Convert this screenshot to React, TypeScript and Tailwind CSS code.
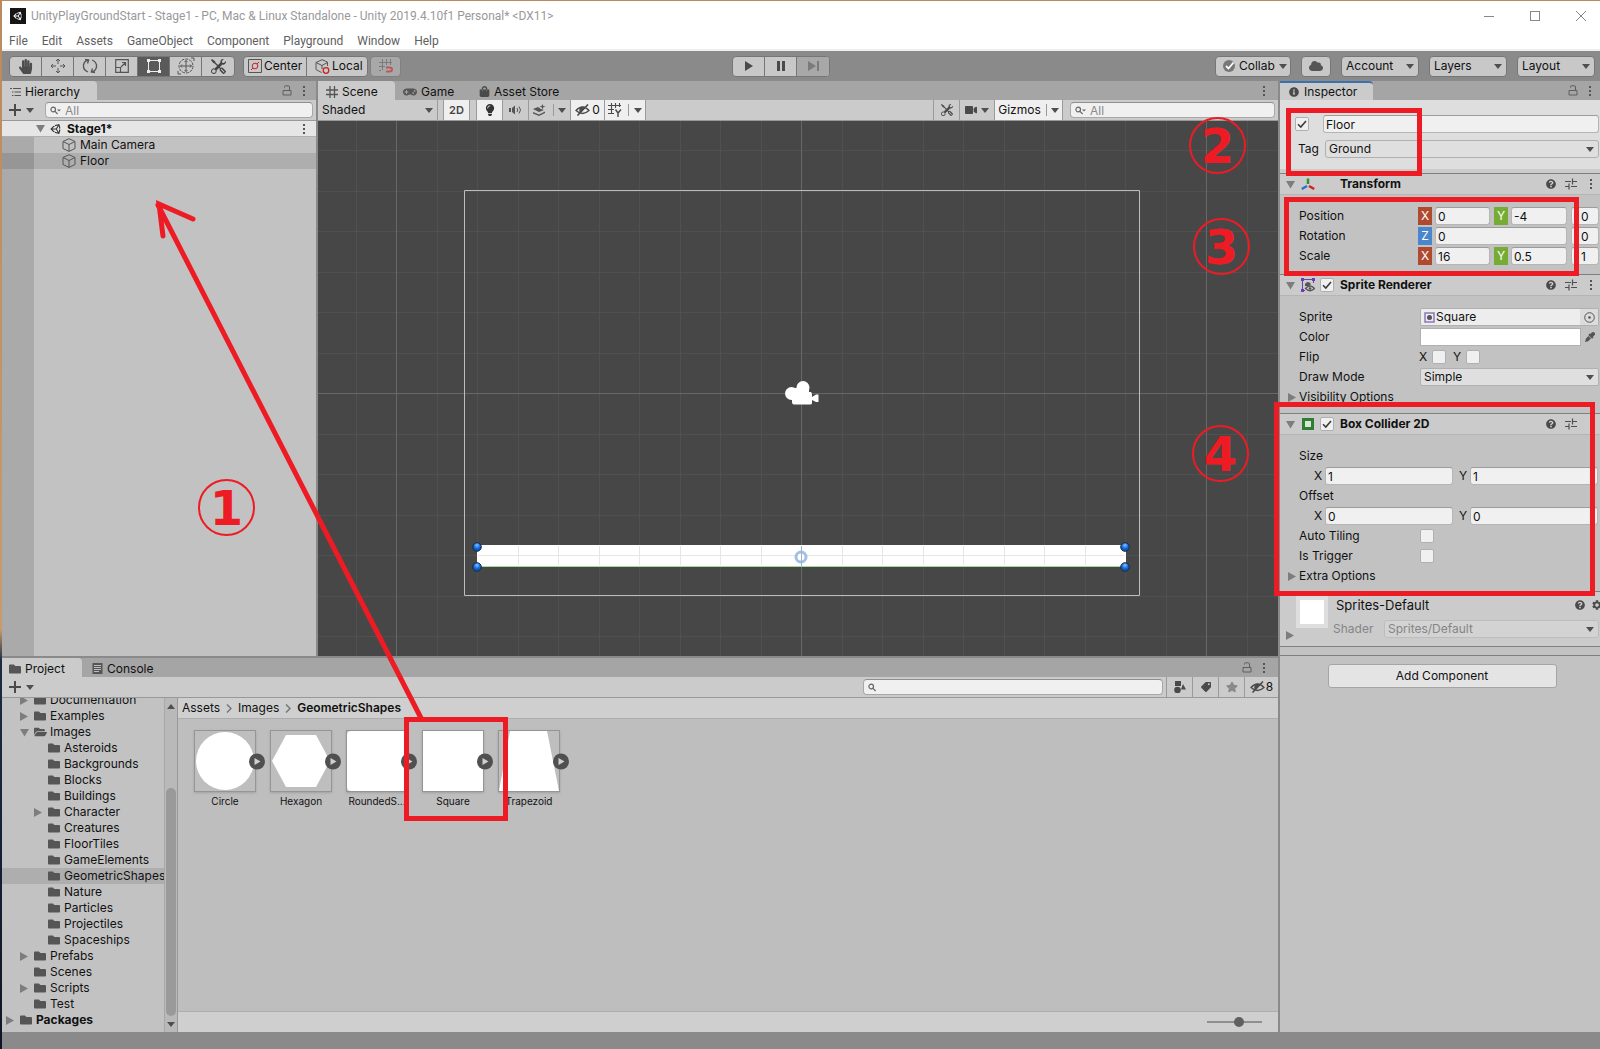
import type { ReactNode } from "react";
import {
  FaCloud,
  FaEyeDropper,
  FaFolder,
  FaFolderOpen,
  FaGamepad,
  FaHandPaper,
  FaInfoCircle,
  FaLightbulb,
  FaQuestionCircle,
  FaShoppingBag,
  FaStar,
  FaTag,
  FaUnity,
  FaVideo,
} from "react-icons/fa";
import { BsTools } from "react-icons/bs";
import { MdSettings } from "react-icons/md";

const menus = ["File", "Edit", "Assets", "GameObject", "Component", "Playground", "Window", "Help"];

type TreeItem = { name: string; level: number; arrow?: "open" | "closed"; selected?: boolean };

const tree: TreeItem[] = [
  { name: "Documentation", level: 1, arrow: "closed" },
  { name: "Examples", level: 1, arrow: "closed" },
  { name: "Images", level: 1, arrow: "open" },
  { name: "Asteroids", level: 2 },
  { name: "Backgrounds", level: 2 },
  { name: "Blocks", level: 2 },
  { name: "Buildings", level: 2 },
  { name: "Character", level: 2, arrow: "closed" },
  { name: "Creatures", level: 2 },
  { name: "FloorTiles", level: 2 },
  { name: "GameElements", level: 2 },
  { name: "GeometricShapes", level: 2, selected: true },
  { name: "Nature", level: 2 },
  { name: "Particles", level: 2 },
  { name: "Projectiles", level: 2 },
  { name: "Spaceships", level: 2 },
  { name: "Prefabs", level: 1, arrow: "closed" },
  { name: "Scenes", level: 1 },
  { name: "Scripts", level: 1, arrow: "closed" },
  { name: "Test", level: 1 },
  { name: "Packages", level: 0, arrow: "closed" },
];

const indents = ["pl-1", "pl-[18px]", "pl-8"];

const shapes = [
  { name: "Circle", shape: <circle cx="30" cy="30" r="29" /> },
  { name: "Hexagon", shape: <path d="M1 30 15 4H45L59 30 45 56H15Z" /> },
  { name: "RoundedS...", shape: <rect width="60" height="60" rx="4" /> },
  { name: "Square", shape: <rect width="60" height="60" /> },
  { name: "Trapezoid", shape: <path d="M11 0H48L60 60H0Z" /> },
];

const Caret = ({ className = "" }: { className?: string }) => (
  <svg viewBox="0 0 8 5" className={`w-2 h-[5px] shrink-0 fill-[#4f4f4f] ${className}`}>
    <path d="M0 0H8L4 5Z" />
  </svg>
);

const Fold = ({ open }: { open?: boolean }) => (
  <svg viewBox="0 0 9 9" className="w-[9px] h-[9px] shrink-0 fill-[#7d7d7d]">
    <path d={open ? "M0 1H9L4.500 8.500Z" : "M0 0V9L8 4.500Z"} />
  </svg>
);

const Dots = () => (
  <svg viewBox="0 0 4 12" className="w-1 h-3 shrink-0 fill-[#555]">
    <path d="M1 1h2v2H1zM1 5h2v2H1zM1 9h2v2H1z" />
  </svg>
);

const Lock = () => (
  <svg viewBox="0 0 10 11" className="w-[10px] h-[11px] shrink-0" fill="none" stroke="#5e5e5e">
    <path d="M1 5.500H9V10H1ZM2.500 2.500V1.500Q2.500 .8 3.500 .8H6.500Q7.500 .8 7.500 2V5" />
  </svg>
);

const Cube = () => (
  <svg viewBox="0 0 14 14" className="w-[14px] h-[14px] shrink-0" fill="none" stroke="#555">
    <path d="M7 .7 13 3.500V10.500L7 13.400 1 10.500V3.500ZM1 3.500 7 6.500 13 3.500M7 6.500V13.400" />
  </svg>
);

const Magnifier = ({ arrow }: { arrow?: boolean }) => (
  <svg viewBox="0 0 11 9" className="w-[11px] h-[9px] shrink-0" fill="none" stroke="#666" strokeWidth="1.200">
    <circle cx="3.200" cy="3.500" r="2.300" />
    <path d="M5 5.300 7.600 8" />
    {arrow && <path d="M7 3.500H11L9 5.500Z" fill="#666" stroke="none" />}
  </svg>
);

const HiddenEye = () => (
  <svg viewBox="0 0 15 12" className="w-[15px] h-3 shrink-0" fill="none" stroke="#4a4a4a" strokeWidth="1.300">
    <path d="M1 6.500Q7.500-.5 14 6.500Q7.500 12.500 1 6.500Z" />
    <path d="M5 8 9 3.500Q6.500 2.800 5 4.500Z" fill="#4a4a4a" />
    <path d="M2.500 11.500 13 .5" strokeWidth="1.600" />
  </svg>
);

const Sliders = () => (
  <svg viewBox="0 0 12 12" className="w-3 h-3 shrink-0" fill="none" stroke="#4f4f4f" strokeWidth="1.200">
    <path d="M0 3.500H6M7.500 .5V6.500M7.500 3.500H12M0 8.500H3.500M4 5.500V11.500M6 8.500H12" />
  </svg>
);

const Chevron = () => (
  <svg viewBox="0 0 6 9" className="w-1.5 h-[9px]" fill="none" stroke="#777" strokeWidth="1.500">
    <path d="M1 .5 5 4.500 1 8.500" />
  </svg>
);

const Search = ({ label, placeholder, className }: { label: string; placeholder?: string; className: string }) => (
  <label
    className={`flex items-center h-4 px-1 gap-1 rounded border border-[#a8a8a8] border-t-[#8f8f8f] bg-[#f0f0f0] ${className}`}
  >
    <Magnifier arrow={!!placeholder} />
    <input
      aria-label={label}
      placeholder={placeholder}
      className="w-full min-w-0 text-xs leading-3 bg-transparent outline-none placeholder:text-[#8a8a8a]"
    />
  </label>
);

const Dropdown = ({ label, value, className }: { label: string; value: string; className: string }) => (
  <span className={`relative flex items-center ${className}`}>
    <select aria-label={label} className="appearance-none w-full h-full outline-none">
      <option>{value}</option>
    </select>
    <Caret className="absolute right-1 pointer-events-none" />
  </span>
);

const Check = ({ label, checked }: { label: string; checked?: boolean }) => (
  <span className="relative flex w-[14px] h-[14px] shrink-0">
    <input
      type="checkbox"
      aria-label={label}
      defaultChecked={checked}
      className="peer appearance-none w-full h-full rounded-xs border border-[#b0b0b0] bg-[#f0f0f0]"
    />
    <svg
      viewBox="0 0 14 14"
      className="absolute inset-0 hidden peer-checked:block pointer-events-none"
      fill="none"
      stroke="#3c3c3c"
      strokeWidth="1.600"
    >
      <path d="M3 7.200 5.800 10 11 4" />
    </svg>
  </span>
);

const Field = ({ label, value, className = "flex-1" }: { label: string; value: string; className?: string }) => (
  <input
    aria-label={label}
    defaultValue={value}
    className={`min-w-0 h-[18px] px-0.5 rounded-[3px] border border-[#b5b5b5] border-t-[#9c9c9c] bg-[#f0f0f0] outline-none ${className}`}
  />
);

const ToolButton = ({ label, className = "", children }: { label: string; className?: string; children: ReactNode }) => (
  <button
    aria-label={label}
    className={`flex items-center justify-center w-8 h-full border-r border-[#767676] last:border-r-0 ${className}`}
  >
    {children}
  </button>
);

const BarButton = ({ label, className = "w-[26px]", children }: { label: string; className?: string; children: ReactNode }) => (
  <button
    aria-label={label}
    className={`flex items-center justify-center h-full shrink-0 border-l border-[#9a9a9a] ${className}`}
  >
    {children}
  </button>
);

type TabProps = { active?: boolean; focused?: boolean; className?: string; icon: ReactNode; children: ReactNode };

const Tab = ({ active, focused, className = "", icon, children }: TabProps) => (
  <button
    className={`flex items-center h-full gap-1 border-t-2 ${focused ? "border-[#3a72b0]" : "border-transparent"} ${
      active ? "bg-[#cbcbcb] rounded-tr-sm" : ""
    } ${className}`}
  >
    {icon}
    {children}
  </button>
);

const AddButton = () => (
  <button aria-label="Create" className="flex items-center gap-[5px]">
    <svg viewBox="0 0 12 12" className="w-3 h-3" stroke="#4a4a4a" strokeWidth="2"><path d="M6 0V12M0 6H12" /></svg>
    <Caret />
  </button>
);

const TitleBar = () => (
  <header className="bg-white border-b-2 border-[#efefef] font-[Roboto,sans-serif]">
    <div className="flex items-center h-[30px] pl-2 pr-[14px]">
      <span className="flex items-center justify-center w-4 h-4 bg-[#151515]">
        <FaUnity className="w-[10px] h-[10px] text-white" />
      </span>
      <h1 className="ml-[5px] text-xs text-[#999] whitespace-nowrap">
        UnityPlayGroundStart - Stage1 - PC, Mac &amp; Linux Standalone - Unity 2019.4.10f1 Personal* &lt;DX11&gt;
      </h1>
      <div className="flex items-center gap-9 ml-auto">
        <button aria-label="Minimize" className="w-[10px] h-[10px]">
          <svg viewBox="0 0 10 10" stroke="#888"><path d="M0 5.500H10" /></svg>
        </button>
        <button aria-label="Maximize" className="w-[10px] h-[10px] border border-[#888]" />
        <button aria-label="Close" className="w-[10px] h-[10px]">
          <svg viewBox="0 0 10 10" stroke="#888"><path d="M0 0 10 10M10 0 0 10" /></svg>
        </button>
      </div>
    </div>
    <nav className="flex gap-[14px] h-[18px] pt-px pl-[7px] text-xs leading-[18px] text-[#606060]">
      {menus.map((menu) => (
        <button key={menu}>{menu}</button>
      ))}
    </nav>
  </header>
);

const Toolbar = () => (
  <div className="flex items-center h-[30px] pl-[7px] pr-[5px] bg-[#8a8a8a]">
    <div className="flex flex-1">
      <div className="flex h-[21px] rounded-sm border border-[#767676] bg-[#c8c8c8] overflow-hidden">
        <ToolButton label="Hand"><FaHandPaper className="w-[15px] h-[15px] text-[#4d4d4d]" /></ToolButton>
        <ToolButton label="Move">
          <svg viewBox="0 0 16 16" className="w-4 h-4" fill="none" stroke="#555">
            <path d="M8 1V6M8 10V15M1 8H6M10 8H15M6 3 8 1 10 3M6 13 8 15 10 13M3 6 1 8 3 10M13 6 15 8 13 10" />
          </svg>
        </ToolButton>
        <ToolButton label="Rotate">
          <svg viewBox="0 0 16 16" className="w-4 h-4" fill="none" stroke="#555" strokeWidth="1.300">
            <path d="M6 14Q1 12 1.500 7Q2.500 2.500 6.500 2M3 1.500 6.700 2 5.500 5.500M10 2Q15 4 14.500 9Q13.500 13.500 9.500 14M13 14.500 9.300 14 10.500 10.500" />
          </svg>
        </ToolButton>
        <ToolButton label="Scale">
          <svg viewBox="0 0 14 14" className="w-[14px] h-[14px]" fill="none" stroke="#555" strokeWidth="1.200">
            <path d="M.7 .7H13.300V13.300H.7ZM.7 8.500H5.500V13.300M6 8 10.500 3.500M7 3.500H10.500V7" />
          </svg>
        </ToolButton>
        <ToolButton label="Rect" className="bg-[#5a5a5a]">
          <svg viewBox="0 0 16 16" className="w-4 h-4" fill="#eee" stroke="#eee">
            <path d="M2.500 2.500H13.500V13.500H2.500Z" fill="none" />
            <path d="M1 1H4V4H1ZM12 1H15V4H12ZM1 12H4V15H1ZM12 12H15V15H12Z" stroke="none" />
          </svg>
        </ToolButton>
        <ToolButton label="Transform tool">
          <svg viewBox="0 0 18 18" className="w-[18px] h-[18px]" fill="none" stroke="#555">
            <circle cx="9" cy="9" r="7" strokeDasharray="3 1" />
            <path d="M9 3.500V14.500M3.500 9H14.500M7.500 5 9 3.500 10.500 5M7.500 13 9 14.500 10.500 13M5 7.500 3.500 9 5 10.500M13 7.500 14.500 9 13 10.500M14 1H17V4M4 17H1V14" />
          </svg>
        </ToolButton>
        <ToolButton label="Custom tools"><BsTools className="w-[15px] h-[15px] text-[#444]" /></ToolButton>
      </div>
      <div className="flex h-[21px] ml-2 rounded-sm border border-[#767676] bg-[#c8c8c8]">
        <button className="flex items-center gap-0.5 pl-1 w-[63px] border-r border-[#767676]">
          <svg viewBox="0 0 14 14" className="w-[14px] h-[14px] shrink-0" fill="none" stroke="#555">
            <path d="M.5 .5H13.500V13.500H.5Z" />
            <path d="M3 11 5 9M9 5 11 3" stroke="#c22" />
            <circle cx="7" cy="7" r="2.800" stroke="#c22" />
          </svg>
          Center
        </button>
        <button className="flex items-center gap-0.5 pl-2 w-[60px]">
          <svg viewBox="0 0 15 15" className="w-[15px] h-[15px] shrink-0" fill="none" stroke="#555">
            <path d="M7 .7 12.500 3V7M7 .7 1 3.500V10.500L6.500 13.500M1 3.500 7 6.500 12.500 3.500M7 6.500V10" />
            <circle cx="11" cy="11.500" r="2.800" stroke="#c22" strokeWidth="1.300" />
          </svg>
          Local
        </button>
      </div>
      <button
        aria-label="Grid snapping"
        className="flex items-center justify-center w-[31px] h-[21px] ml-0.5 rounded-sm border border-[#808080] bg-[#a8a8a8]"
      >
        <svg viewBox="0 0 16 16" className="w-4 h-4" fill="none" stroke="#7b7b7b">
          <path d="M4.500 1V12M8.500 1V7M12.500 1V7M1 4.500H14M1 8.500H7M1 12.500H3" />
          <path d="M8 9.500H11.500Q14 9.500 14 11.500T11.500 13.500H8" stroke="#b85b5b" strokeWidth="2" />
        </svg>
      </button>
    </div>
    <div className="flex h-[21px] mr-[42px] rounded-sm border border-[#767676] bg-[#c8c8c8] overflow-hidden">
      <ToolButton label="Play">
        <svg viewBox="0 0 10 10" className="w-[10px] h-[10px] fill-[#4a4a4a]"><path d="M1 0 9 5 1 10Z" /></svg>
      </ToolButton>
      <ToolButton label="Pause">
        <svg viewBox="0 0 10 10" className="w-[10px] h-[10px] fill-[#4a4a4a]"><path d="M1 0H4V10H1ZM6 0H9V10H6Z" /></svg>
      </ToolButton>
      <ToolButton label="Step" className="bg-[#a8a8a8]">
        <svg viewBox="0 0 11 10" className="w-[11px] h-[10px] fill-[#7b7b7b]"><path d="M0 0 8 5 0 10ZM9 0H11V10H9Z" /></svg>
      </ToolButton>
    </div>
    <div className="flex flex-1 justify-end gap-[10px] h-[21px]">
      <button className="flex items-center gap-1 w-[76px] pl-[7px] rounded-sm border border-[#767676] bg-[#c8c8c8]">
        <svg viewBox="0 0 12 12" className="w-3 h-3 shrink-0">
          <circle cx="6" cy="6" r="6" fill="#777" />
          <path d="M3 6 5.500 8.500 10.500 2.500" stroke="#fff" strokeWidth="1.800" fill="none" />
        </svg>
        Collab
        <Caret />
      </button>
      <button aria-label="Cloud" className="flex items-center justify-center w-[30px] rounded-sm border border-[#767676] bg-[#c8c8c8]">
        <FaCloud className="w-[14px] h-[14px] text-[#555]" />
      </button>
      {["Account", "Layers", "Layout"].map((name) => (
        <Dropdown key={name} label={name} value={name} className="w-[78px] pl-1 rounded-sm border border-[#767676] bg-[#c8c8c8]" />
      ))}
    </div>
  </div>
);

const Hierarchy = () => (
  <section className="flex flex-col w-[314px] shrink-0 bg-[#c2c2c2]">
    <div className="flex items-center h-[19px] pr-2.5 bg-[#a5a5a5]">
      <Tab
        active
        className="w-[95px] pl-2"
        icon={
          <svg viewBox="0 0 11 10" className="w-[11px] h-[10px]" stroke="#555" strokeWidth="1.200">
            <path d="M0 1.500H2M3 1.500H11M2 5H3.500M4.500 5H11M2 8.500H3.500M4.500 8.500H11" />
          </svg>
        }
      >
        Hierarchy
      </Tab>
      <div className="flex items-center gap-2.5 ml-auto"><Lock /><Dots /></div>
    </div>
    <div className="flex items-center h-[21px] pl-[7px] pr-[3px] border-b border-[#999] bg-[#cbcbcb]">
      <AddButton />
      <Search label="Search hierarchy" placeholder="All" className="flex-1 ml-[11px]" />
    </div>
    <div className="flex items-center h-4 pl-[34px] pr-2.5 border-b border-[#b0b0b0] bg-[#e6e6e6] font-bold">
      <Fold open />
      <FaUnity className="w-3 h-3 ml-[5px] mr-[5px] text-[#333]" />
      Stage1*
      <span className="ml-auto"><Dots /></span>
    </div>
    <ul className="flex-1 bg-[linear-gradient(90deg,#aaa_32px,#c2c2c2_32px)]">
      <li className="flex items-center h-4 pl-[60px] gap-1"><Cube />Main Camera</li>
      <li className="flex items-center h-4 pl-[60px] gap-1 bg-[linear-gradient(90deg,#969696_32px,#aeaeae_32px)]">
        <Cube />Floor
      </li>
    </ul>
  </section>
);

const gridX = Array.from({ length: 24 }, (_, i) => 483.5 + (i - 12) * 40.5);
const gridY = Array.from({ length: 13 }, (_, i) => 272.5 + (i - 6) * 40.5);

const SceneCanvas = () => (
  <svg viewBox="0 0 960 535" preserveAspectRatio="xMidYMid slice" className="flex-1 w-full min-h-0 bg-[#474747]">
    <defs>
      <radialGradient id="handle" cx=".5" cy=".3">
        <stop offset="0" stopColor="#8ec3ff" />
        <stop offset=".6" stopColor="#1f78e8" />
        <stop offset="1" stopColor="#0a56c0" />
      </radialGradient>
    </defs>
    <g stroke="#505050" shapeRendering="crispEdges">
      {gridX.map((x) => <path key={x} d={`M${x} 0V535`} />)}
      {gridY.map((y) => <path key={y} d={`M0 ${y}H960`} />)}
    </g>
    <path d="M78.500 0V535M483.500 0V535M888.500 0V535M0 272.500H960" stroke="#686868" />
    <path d="M146.500 69.500H821.500V474.500H146.500Z" fill="none" stroke="#bdbdbd" />
    <path d="M159 424H808V445H159Z" fill="#fff" />
    <g stroke="#e6e6e6" shapeRendering="crispEdges">
      {gridX.slice(5, 20).map((x) => <path key={x} d={`M${x} 425V444`} />)}
      <path d="M160 434.500H807" />
    </g>
    <path d="M159 445.500H808" stroke="#9fdc96" />
    <circle cx="483" cy="436" r="5" fill="#fff" stroke="#a3bfe6" strokeWidth="3" />
    <path d="M483.500 425V445" stroke="#9fb0c8" />
    {[159, 807].map((x) =>
      [426, 446].map((y) => (
        <circle key={`${x}-${y}`} cx={x} cy={y} r="4.300" fill="url(#handle)" stroke="#1d2b40" />
      )),
    )}
    <g fill="#fff">
      <circle cx="473.500" cy="272.500" r="6.500" />
      <circle cx="485" cy="266.500" r="6.500" />
      <path d="M474 267H491V271H493Q494 272 494 274V282Q494 283.500 492 283.500H476Q474 283.500 474 281ZM494 276 498 273.500H500.500V281H498L494 279Z" />
    </g>
  </svg>
);

const Scene = () => (
  <section className="flex flex-col flex-1 min-w-0">
    <div className="flex items-center h-[19px] pr-3 bg-[#a5a5a5]">
      <Tab
        active
        className="w-[77px] pl-2"
        icon={
          <svg viewBox="0 0 12 12" className="w-3 h-3" stroke="#555" strokeWidth="1.300">
            <path d="M4 0V12M8.500 0V12M0 4H12M0 8.500H12" />
          </svg>
        }
      >
        Scene
      </Tab>
      <Tab className="w-[77px] pl-2" icon={<FaGamepad className="w-[14px] h-[14px] text-[#555]" />}>Game</Tab>
      <Tab className="pl-[7px]" icon={<FaShoppingBag className="w-[11px] h-[11px] text-[#4a4a4a]" />}>Asset Store</Tab>
      <span className="ml-auto"><Dots /></span>
    </div>
    <div className="flex items-center h-[21px] pr-[3px] border-b border-[#999] bg-[#cbcbcb]">
      <Dropdown label="Shading mode" value="Shaded" className="w-[120px] h-full pl-1 border-r border-[#9a9a9a]" />
      <BarButton label="2D" className="w-[26px] ml-[5px] bg-[#efefef] text-[11px] font-semibold text-[#444]">2D</BarButton>
      <span className="w-[7px] h-full border-l border-[#9a9a9a]" />
      <BarButton label="Lighting" className="w-[26px] bg-[#efefef]"><FaLightbulb className="w-3 h-3 text-[#333]" /></BarButton>
      <BarButton label="Audio">
        <svg viewBox="0 0 13 10" className="w-[13px] h-[10px]" fill="none" stroke="#555">
          <path d="M0 3H2V7H0ZM3 3 6 .5V9.500L3 7Z" fill="#555" stroke="none" />
          <path d="M8 3Q9.500 5 8 7M10 1.500Q13 5 10 8.500" />
        </svg>
      </BarButton>
      <BarButton label="Effects" className="w-[42px] gap-[7px]">
        <svg viewBox="0 0 13 12" className="w-[13px] h-3" fill="#555">
          <path d="M0 5 5 3 8 5 11 6 6 8ZM0 8 6 10.500 12 7.500V9L6 12 0 9.500ZM9.500 0 10.300 2 12.500 2.500 10.300 3.300 9.500 5.500 8.700 3.300 6.500 2.500 8.700 2Z" />
        </svg>
        <span className="flex items-center h-3 pl-1 border-l border-[#9a9a9a]"><Caret /></span>
      </BarButton>
      <BarButton label="Hidden objects" className="w-[34px] gap-0.5 bg-[#efefef]"><HiddenEye />0</BarButton>
      <BarButton label="Grid axis" className="w-[42px] gap-1.5 border-r bg-[#efefef]">
        <svg viewBox="0 0 14 14" className="w-[14px] h-[14px]" fill="none" stroke="#4a4a4a" strokeWidth="1.100">
          <path d="M3.500 0V11M7.500 0V5M11.500 0V4M0 2.500H13M0 6.500H6M0 10.500H6" />
          <path d="M7.500 6.500 10 10 13 6.500M10 10V14" strokeWidth="1.400" />
        </svg>
        <span className="flex items-center h-3 pl-[5px] border-l border-[#9a9a9a]"><Caret /></span>
      </BarButton>
      <span className="flex-1" />
      <BarButton label="Component tools"><BsTools className="w-3 h-3 text-[#4a4a4a]" /></BarButton>
      <BarButton label="Scene camera" className="w-[35px] gap-1"><FaVideo className="w-3 h-3 text-[#4a4a4a]" /><Caret /></BarButton>
      <BarButton label="Gizmos" className="w-[69px] gap-[5px] border-r bg-[#efefef]">
        Gizmos
        <span className="flex items-center h-3 pl-1 border-l border-[#9a9a9a]"><Caret /></span>
      </BarButton>
      <Search label="Search scene" placeholder="All" className="w-[205px] ml-[7px]" />
    </div>
    <SceneCanvas />
  </section>
);

const Project = () => (
  <section className="flex flex-col h-[374px] bg-[#c2c2c2]">
    <div className="flex items-center h-[19px] shrink-0 pr-3 bg-[#a5a5a5]">
      <Tab active className="w-20 pl-[7px]" icon={<FaFolder className="w-3 h-3 text-[#555]" />}>Project</Tab>
      <Tab
        className="pl-2.5"
        icon={
          <svg viewBox="0 0 11 11" className="w-[11px] h-[11px]">
            <path d="M.5 0H10.500V11H.5Z" fill="#555" />
            <path d="M2 2.500H9M2 4.500H9M2 6.500H9M2 8.500H7" stroke="#bbb" />
          </svg>
        }
      >
        Console
      </Tab>
      <div className="flex items-center gap-2.5 ml-auto"><Lock /><Dots /></div>
    </div>
    <div className="flex items-center h-[21px] shrink-0 pl-[7px] border-b border-[#999] bg-[#cbcbcb]">
      <AddButton />
      <Search label="Search project" className="w-[300px] ml-auto mr-[3px]" />
      <BarButton label="Search by type">
        <svg viewBox="0 0 12 12" className="w-3 h-3" fill="#4a4a4a">
          <path d="M1 0H7V5H1ZM9 3 12 8.500H7Z" />
          <circle cx="3.500" cy="9" r="3.300" />
        </svg>
      </BarButton>
      <BarButton label="Search by label"><FaTag className="w-[10px] h-[10px] -scale-x-100 text-[#4a4a4a]" /></BarButton>
      <BarButton label="Save search"><FaStar className="w-3 h-3 text-[#8a8a8a]" /></BarButton>
      <BarButton label="Hidden packages" className="w-[34px] gap-px"><HiddenEye />8</BarButton>
    </div>
    <div className="flex flex-1 min-h-0">
      <div className="w-[162px] shrink-0 overflow-hidden">
        <ul className="-mt-1.5">
          {tree.map((item) => (
            <li
              key={item.name}
              className={`flex items-center h-4 whitespace-nowrap ${indents[item.level]} ${
                item.selected ? "bg-[#aeaeae]" : ""
              } ${item.level === 0 ? "font-bold" : ""}`}
            >
              <span className="w-[14px] shrink-0">{item.arrow && <Fold open={item.arrow === "open"} />}</span>
              {item.arrow === "open" ? (
                <FaFolderOpen className="w-[13px] h-3 mr-[3px] shrink-0 text-[#555]" />
              ) : (
                <FaFolder className="w-3 h-3 mr-1 shrink-0 text-[#555]" />
              )}
              {item.name}
            </li>
          ))}
        </ul>
      </div>
      <div className="flex flex-col items-center w-[14px] shrink-0 pt-1.5 pb-[5px] border-x border-[#a8a8a8] border-r-[#999] bg-[#b9b9b9]">
        <Caret className="rotate-180" />
        <span className="w-[10px] h-[228px] mt-auto mb-1.5 rounded-full bg-[#9a9a9a]" />
        <Caret />
      </div>
      <div className="flex flex-col flex-1 bg-[#bebebe]">
        <nav className="flex items-center gap-1.5 h-[21px] pl-1 border-b border-[#adadad] bg-[#cfcfcf]">
          <a href="#assets">Assets</a>
          <Chevron />
          <a href="#images">Images</a>
          <Chevron />
          <a href="#geometric-shapes" className="font-semibold">GeometricShapes</a>
        </nav>
        <div className="flex flex-1 gap-[14px] pt-[11px] pl-4">
          {shapes.map(({ name, shape }) => (
            <figure key={name} className="relative w-[62px]">
              <svg viewBox="0 0 60 60" className="w-[62px] h-[62px] border border-[#959595] shadow-[0_1px_2px_#8888]" fill="#fff">
                {shape}
              </svg>
              <svg viewBox="0 0 18 18" className="absolute top-[22px] left-[54px] w-[18px] h-[18px]">
                <circle cx="9" cy="9.500" r="8" fill="#505050" />
                <path d="M6.500 6 12.500 9.500 6.500 13Z" fill="#d0d0d0" />
              </svg>
              <figcaption className="mt-0.5 text-[10px] leading-[14px] text-center">{name}</figcaption>
            </figure>
          ))}
        </div>
        <div className="flex items-center justify-end h-[21px] pr-4 border-t border-[#adadad] bg-[#cfcfcf]">
          <input
            type="range"
            aria-label="Icon size"
            defaultValue={60}
            className="appearance-none w-[55px] h-0.5 bg-[#8f8f8f] [&::-webkit-slider-thumb]:appearance-none [&::-webkit-slider-thumb]:w-[10px] [&::-webkit-slider-thumb]:h-[10px] [&::-webkit-slider-thumb]:rounded-full [&::-webkit-slider-thumb]:bg-[#606060]"
          />
        </div>
      </div>
    </div>
  </section>
);

const ComponentHeader = ({ title, icon, check }: { title: string; icon: ReactNode; check?: boolean }) => (
  <div className="flex items-center h-[22px] pl-1.5 pr-[7px] border-y border-t-[#7f7f7f] border-b-[#b5b5b5] bg-[#cbcbcb]">
    <Fold open />
    <span className="flex justify-center w-[14px] ml-1.5 mr-[5px]">{icon}</span>
    <span className="w-5">{check && <Check label={`${title} enabled`} checked />}</span>
    <h2 className="font-bold">{title}</h2>
    <div className="flex items-center ml-auto">
      <FaQuestionCircle className="w-[10px] h-[10px] text-[#4a4a4a]" />
      <span className="ml-[9px] mr-3"><Sliders /></span>
      <Dots />
    </div>
  </div>
);

const Row = ({ label, children }: { label: string; children?: ReactNode }) => (
  <div className="flex items-center h-[18px]">
    <span className="w-[121px] shrink-0">{label}</span>
    {children}
  </div>
);

const axisColors = { X: "bg-[#b04a2f]", Y: "bg-[#76ac33]", Z: "bg-[#4a86cc]" };

const Axis = ({ name }: { name: "X" | "Y" | "Z" }) => (
  <span className={`w-[14px] h-[18px] mr-[3px] shrink-0 leading-[18px] text-center text-white ${axisColors[name]}`}>
    {name}
  </span>
);

const TransformRow = ({ label, x, y, z }: { label: string; x: string; y: string; z: string }) => (
  <div className="flex items-center h-[18px] pr-px">
    <span className="w-[119px] shrink-0">{label}</span>
    <Axis name="X" />
    <Field label={`${label} X`} value={x} className="w-[55px] mr-1" />
    <Axis name="Y" />
    <Field label={`${label} Y`} value={y} className="w-14 mr-1" />
    <Field label={`${label} Z`} value={z} className="flex-1 pl-[9px]" />
  </div>
);

const VectorRow = ({ label, x, y }: { label: string; x: string; y: string }) => (
  <div className="flex items-center h-[18px] pl-[15px] pr-0.5">
    <span className="w-[11px]">X</span>
    <Field label={`${label} X`} value={x} />
    <span className="w-[11px] ml-1.5">Y</span>
    <Field label={`${label} Y`} value={y} />
  </div>
);

const FoldRow = ({ label }: { label: string }) => (
  <button className="flex items-center gap-0.5 h-[18px] -ml-[11px]"><Fold />{label}</button>
);

const RedBox = ({ className }: { className: string }) => (
  <div className={`absolute z-10 border-5 border-[#ed1c24] pointer-events-none ${className}`} />
);

const Step = ({ n, className }: { n: number; className: string }) => (
  <div
    className={`absolute z-10 flex items-center justify-center w-[57px] h-[57px] rounded-full border-2 border-[#ed1c24] text-5xl leading-none font-bold text-[#ed1c24] font-['DejaVu_Sans',sans-serif] pointer-events-none ${className}`}
  >
    {n}
  </div>
);

const Inspector = () => (
  <aside className="relative w-80 shrink-0 bg-[#c2c2c2]">
    <div className="flex items-center h-[19px] pr-2 bg-[#a5a5a5]">
      <Tab
        active
        focused
        className="w-[93px] pl-[9px]"
        icon={<FaInfoCircle className="w-[10px] h-[10px] mr-px text-[#4a4a4a]" />}
      >
        Inspector
      </Tab>
      <div className="flex items-center gap-2.5 ml-auto"><Lock /><Dots /></div>
    </div>
    <div className="h-[73px] pt-[15px] pr-px border-b-4 border-[#cbcbcb] bg-[#dedede]">
      <div className="flex items-center pl-[15px] gap-[14px]">
        <Check label="Floor active" checked />
        <Field label="Name" value="Floor" />
      </div>
      <div className="flex items-center pl-[18px] mt-[7px]">
        <span className="w-[27px]">Tag</span>
        <Dropdown label="Tag" value="Ground" className="flex-1 h-[18px] pl-[3px] rounded-[3px] border border-[#b0b0b0] bg-[#dfdfdf]" />
      </div>
    </div>

    <ComponentHeader
      title="Transform"
      icon={
        <svg viewBox="0 0 14 13" className="w-[14px] h-[13px]" strokeWidth="2.500" fill="none">
          <path d="M7 .5V6" stroke="#2f8f35" />
          <path d="M6 8 .8 11" stroke="#2a6fd0" />
          <path d="M8 8 13.200 11" stroke="#c22" />
        </svg>
      }
    />
    <div className="flex flex-col gap-0.5 pt-3 pb-[9px] pl-[19px]">
      <TransformRow label="Position" x="0" y="-4" z="0" />
      <div className="flex items-center h-[18px] pr-px">
        <span className="w-[119px] shrink-0">Rotation</span>
        <Axis name="Z" />
        <Field label="Rotation Z" value="0" className="w-[132px] mr-1" />
        <Field label="Rotation" value="0" className="flex-1 pl-[9px]" />
      </div>
      <TransformRow label="Scale" x="16" y="0.5" z="1" />
    </div>

    <ComponentHeader
      title="Sprite Renderer"
      check
      icon={
        <svg viewBox="0 0 14 14" className="w-[14px] h-[14px]" fill="none" stroke="#6a3fb5">
          <path d="M1.500 12.500V1.500H12.500V5M1.500 12.500H4" />
          <path d="M0 0H3V3H0ZM11 0H14V3H11ZM0 11H3V14H0Z" fill="#6a3fb5" stroke="none" />
          <path d="M4 6Q7 2 10 6L8 8H4Z" fill="#555" stroke="none" />
          <path d="M4.500 10.500Q9 5.500 13.500 10.500Q9 15 4.500 10.500Z" stroke="#555" strokeWidth="1.300" />
          <circle cx="9" cy="10.500" r="1.300" fill="#555" stroke="none" />
        </svg>
      }
    />
    <div className="flex flex-col gap-0.5 pt-3 pb-[7px] pl-[19px] pr-px">
      <Row label="Sprite">
        <button className="flex items-center flex-1 h-[18px] pl-[3px] rounded-xs border border-[#b0b0b0] bg-[#ededed]">
          <svg viewBox="0 0 11 11" className="w-[11px] h-[11px] mr-px" fill="none" stroke="#8f78bd">
            <path d="M1 1H10V10H1Z" strokeWidth="1.500" />
            <circle cx="5.500" cy="5.500" r="2.500" fill="#555" stroke="none" />
          </svg>
          Square
          <span className="flex items-center justify-center w-[18px] h-full ml-auto bg-[#dcdcdc]">
            <svg viewBox="0 0 11 11" className="w-[11px] h-[11px]" fill="none" stroke="#555">
              <circle cx="5.500" cy="5.500" r="4.800" />
              <circle cx="5.500" cy="5.500" r="1.300" fill="#555" stroke="none" />
            </svg>
          </span>
        </button>
      </Row>
      <Row label="Color">
        <button aria-label="Color" className="flex-1 h-[18px] border border-[#b0b0b0] bg-white" />
        <button aria-label="Pick color" className="flex items-center justify-center w-[18px]">
          <FaEyeDropper className="w-[10px] h-[10px] text-[#555]" />
        </button>
      </Row>
      <Row label="Flip">
        <span className="w-[13px] -ml-px">X</span>
        <Check label="Flip X" />
        <span className="w-[13px] ml-[7px]">Y</span>
        <Check label="Flip Y" />
      </Row>
      <Row label="Draw Mode">
        <Dropdown label="Draw Mode" value="Simple" className="flex-1 h-[18px] pl-[3px] rounded-xs border border-[#b0b0b0] bg-[#dfdfdf]" />
      </Row>
      <FoldRow label="Visibility Options" />
    </div>

    <ComponentHeader
      title="Box Collider 2D"
      check
      icon={<span className="w-3 h-3 border-3 border-[#2e7d32] bg-[#d8e6d8]" />}
    />
    <div className="flex flex-col gap-0.5 pt-3 pb-1.5 pl-[19px]">
      <Row label="Size" />
      <VectorRow label="Size" x="1" y="1" />
      <Row label="Offset" />
      <VectorRow label="Offset" x="0" y="0" />
      <Row label="Auto Tiling"><Check label="Auto Tiling" /></Row>
      <Row label="Is Trigger"><Check label="Is Trigger" /></Row>
      <FoldRow label="Extra Options" />
    </div>

    <div className="flex h-14 pl-1.5 border-y border-[#7f7f7f] bg-[#cbcbcb]">
      <span className="self-end mb-1.5"><Fold /></span>
      <span className="w-8 h-8 mt-1 ml-px border-4 border-[#dedede] bg-white" />
      <div className="flex-1 pt-[3px] pr-px">
        <div className="flex items-center h-5 pl-2 text-[13px]">
          Sprites-Default
          <FaQuestionCircle className="w-[10px] h-[10px] ml-auto mr-1.5 text-[#4a4a4a]" />
          <MdSettings className="w-3 h-3 -mr-1 text-[#4a4a4a]" />
        </div>
        <div className="flex items-center mt-[5px] pl-[5px] text-[#858585]">
          <span className="w-[51px]">Shader</span>
          <Dropdown label="Shader" value="Sprites/Default" className="flex-1 h-[18px] pl-[3px] rounded-[3px] border border-[#bdbdbd] bg-[#d3d3d3]" />
        </div>
      </div>
    </div>
    <div className="mt-2 pt-2 pl-1 border-t border-[#7f7f7f]">
      <button className="block w-[229px] h-6 mx-auto rounded-[3px] border border-[#a5a5a5] bg-[#e4e4e4]">Add Component</button>
    </div>

    <RedBox className="top-[27px] left-1.5 w-[136px] h-[68px]" />
    <RedBox className="top-[116px] left-1 w-[295px] h-[79px]" />
    <RedBox className="top-[321px] -left-1.5 w-[321px] h-[194px]" />
    <Step n={2} className="top-9 -left-[91px]" />
    <Step n={3} className="top-[137px] -left-[87px]" />
    <Step n={4} className="top-[344px] -left-[88px]" />
  </aside>
);

const App = () => {
  return (
    <div className="relative flex flex-col min-h-screen pt-px pl-0.5 overflow-hidden bg-[linear-gradient(180deg,#b98a5c_0,#c79c6d_60%,#1d2b40_63%,#0d1626_100%)] text-xs leading-4 text-[#111] font-[Inter,sans-serif]">
      <TitleBar />
      <Toolbar />
      <main className="flex flex-1 gap-0.5 bg-[#8a8a8a]">
        <div className="flex flex-col flex-1 min-w-0 gap-0.5">
          <div className="flex flex-1 gap-0.5">
            <Hierarchy />
            <Scene />
          </div>
          <Project />
        </div>
        <Inspector />
      </main>
      <footer className="h-[17px] bg-[#8a8a8a]" />

      {/* drag path from the Square sprite to the hierarchy */}
      <svg viewBox="0 0 280 530" className="absolute z-10 top-[195px] left-[150px] w-[280px] h-[530px] pointer-events-none" fill="none" stroke="#ed1c24" strokeWidth="5" strokeLinecap="round">
        <path d="M271 523 8 10M13 41 9 9 43 24" />
      </svg>
      <RedBox className="top-[717px] left-[404px] w-[104px] h-[104px]" />
      <Step n={1} className="top-[479px] left-[198px]" />
    </div>
  );
};

export default App;
